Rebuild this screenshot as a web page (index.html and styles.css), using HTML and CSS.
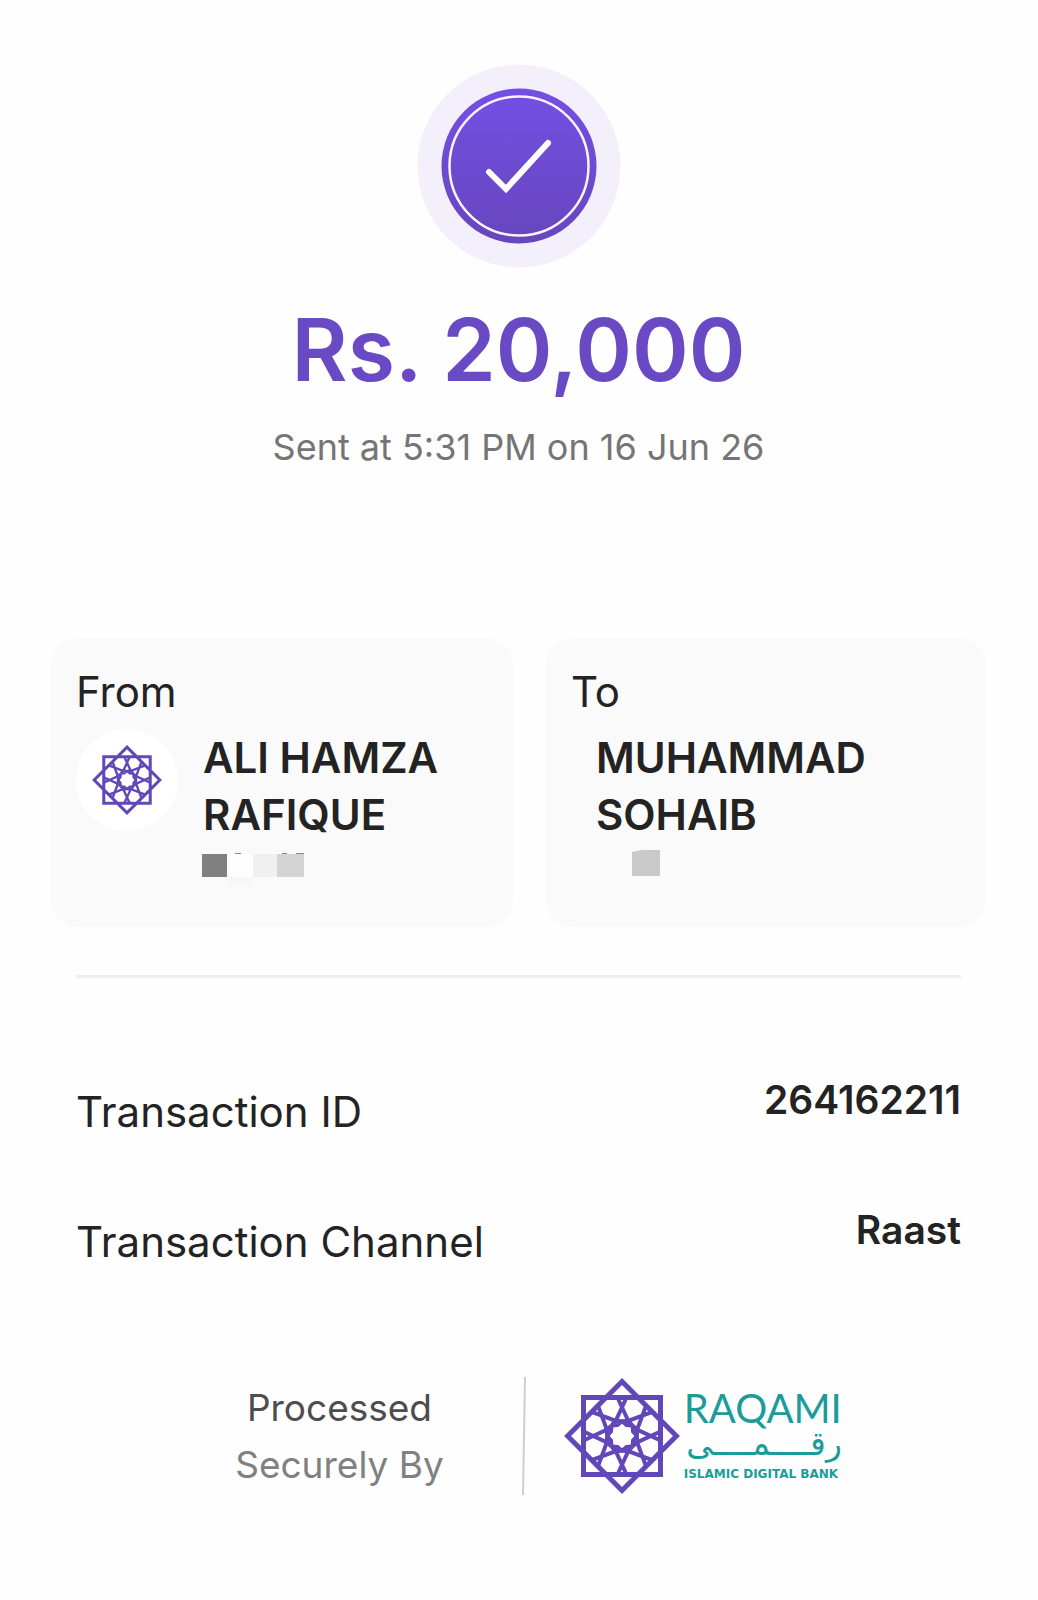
FILE: index.html
```html
<!DOCTYPE html>
<html lang="en">
<head>
<meta charset="utf-8">
<meta name="viewport" content="width=device-width, initial-scale=1">
<title>Transaction receipt</title>
<link rel="stylesheet" href="styles.css">
</head>
<body>
<svg class="defs" width="0" height="0" aria-hidden="true">
  <defs>
    <g id="rosette">
      <path d="M-38.5-38.5H38.5V38.5H-38.5ZM0-54.4L54.4 0L0 54.4L-54.4 0Z"/>
      <g id="half" stroke-width="4">
        <g id="quarter">
          <path id="strand" d="M-4.500-38.500L6.100-15.500L10.500-10.500M4.500-38.500L-6.100-15.500L-10.500-10.500M0-15L4.500-11L10.500-10.500"/>
          <use href="#strand" transform="rotate(45)"/>
        </g>
        <use href="#quarter" transform="rotate(90)"/>
      </g>
      <use href="#half" transform="rotate(180)"/>
    </g>
  </defs>
</svg>
<main class="receipt">
  <header class="summary">
    <svg class="status" viewBox="0 0 204 204" role="img" aria-label="Successful">
      <defs>
        <linearGradient id="badge" x1="0" y1="0" x2="0" y2="1">
          <stop offset="0" stop-color="#7350e4"/>
          <stop offset="1" stop-color="#6746bd"/>
        </linearGradient>
      </defs>
      <circle cx="102" cy="102" r="101.5" fill="#f3f0fc"/>
      <circle cx="102" cy="102" r="77.5" fill="url(#badge)"/>
      <circle cx="102" cy="102" r="69.5" fill="none" stroke="#fbf3ff" stroke-width="2.5"/>
      <path d="M72 108L89 125L131 79" fill="none" stroke="#fff" stroke-width="6" stroke-linecap="round"/>
    </svg>
    <h1 class="amount">Rs. 20,000</h1>
    <p class="time">Sent at 5:31 PM on 16 Jun 26</p>
  </header>

  <section class="parties">
    <article class="card">
      <h2 class="role">From</h2>
      <div class="person">
        <span class="avatar"><svg class="avatar-mark" viewBox="-58 -58 116 116"><use href="#rosette"/></svg></span>
        <div class="identity">
          <p class="name">ALI HAMZA RAFIQUE</p>
          <svg class="mask" viewBox="0 0 112 38" aria-hidden="true">
            <path fill="#808080" d="M-1 7h25v23h-25z"/>
            <path fill="#fdfdfd" d="M26 7h24v23H26z"/>
            <path fill="#f7f7f7" d="M26 30h24v9H26z"/>
            <path fill="#f0f0f0" d="M50 7h24v23H50z"/>
            <path fill="#d4d4d4" d="M74 7h27v23H74z"/>
            <path fill="#888" d="M32 6h6v1h-6zM79 6h5v1h-5zM93 6h8v1h-8z"/>
          </svg>
        </div>
      </div>
    </article>
    <article class="card">
      <h2 class="role">To</h2>
      <div class="person">
        <div class="identity">
          <p class="name">MUHAMMAD SOHAIB</p>
          <svg class="mask" viewBox="0 0 112 38" aria-hidden="true">
            <path fill="#cacaca" d="M36 5l10-2h18v26H36z"/>
            <path fill="#fbfbfb" d="M65 8h20v40H65z"/>
          </svg>
        </div>
      </div>
    </article>
  </section>

  <dl class="details">
    <div class="detail"><dt>Transaction ID</dt><dd>264162211</dd></div>
    <div class="detail"><dt>Transaction Channel</dt><dd>Raast</dd></div>
  </dl>

  <footer class="footer">
    <p class="processed"><span>Processed</span><br>Securely By</p>
    <svg class="rule" viewBox="0 0 4 118" aria-hidden="true"><path d="M3 0L1 118" stroke="#cfcfcf" stroke-width="2"/></svg>
    <div class="brand">
      <svg class="brand-mark" viewBox="-58 -58 116 116" aria-hidden="true"><use href="#rosette"/></svg>
      <div class="wordmark">
        <span class="latin">RAQAMI</span>
        <span class="arabic" lang="ar" dir="rtl">رقــــمــــى</span>
        <span class="tagline">ISLAMIC DIGITAL BANK</span>
      </div>
    </div>
  </footer>
</main>
</body>
</html>
```
FILE: styles.css
```css
* {
  box-sizing: border-box;
}

body {
  margin: 0;
  background: #fefefe;
  color: #232323;
  font-family: Inter, "Liberation Sans", sans-serif;
}

h1, h2, p, dl, dd {
  margin: 0;
}

.defs {
  position: absolute;
}

.receipt {
  padding: 64px 52px 64px 51px;
}

.summary {
  display: flex;
  flex-direction: column;
  align-items: center;
}

.status {
  width: 204px;
  height: 204px;
}

.amount {
  margin-top: 28px;
  font-size: 86px;
  font-weight: 600;
  line-height: 108px;
  color: #6949c4;
}

.time {
  margin-top: 20px;
  font-size: 36px;
  font-weight: 400;
  line-height: 46px;
  color: #757575;
}

.parties {
  display: grid;
  grid-template-columns: 21fr 20fr;
  gap: 33px;
  margin-top: 168px;
}

.card {
  min-height: 289px;
  padding: 26px 25px;
  border-radius: 26px;
  background: #fafafa;
}

.role {
  font-size: 42px;
  font-weight: 400;
  line-height: 56px;
}

.person {
  display: flex;
  gap: 25px;
  margin-top: 9px;
}

.person .identity:first-child {
  padding-left: 25px;
}

.avatar {
  display: grid;
  flex: none;
  place-items: center;
  width: 102px;
  height: 102px;
  border-radius: 50%;
  background: #fff;
}

.avatar-mark,
.brand-mark {
  fill: none;
  stroke: #6247b8;
  stroke-width: 5;
}

.avatar-mark {
  width: 70px;
  height: 70px;
}

.name {
  font-size: 42px;
  font-weight: 600;
  line-height: 57px;
}

.mask {
  display: block;
  width: 112px;
  height: 38px;
  margin-top: 4px;
  overflow: visible;
}

.details {
  display: grid;
  gap: 76px;
  margin: 48px 25px 0;
  padding-top: 106px;
  border-top: 3px solid #eee;
}

.detail {
  display: flex;
  justify-content: space-between;
}

.detail dt {
  padding-top: 2px;
  font-size: 42px;
  font-weight: 400;
  line-height: 52px;
}

.detail dd {
  font-size: 39px;
  font-weight: 600;
  line-height: 32px;
}

.footer {
  display: flex;
  justify-content: center;
  align-items: center;
  margin-top: 109px;
  padding-left: 40px;
}

.processed {
  font-size: 37px;
  font-weight: 400;
  line-height: 57px;
  text-align: center;
  color: #808080;
}

.processed span {
  color: #4d4d4d;
}

.rule {
  width: 4px;
  height: 118px;
  margin: 0 38px 0 78px;
}

.brand {
  display: flex;
  align-items: center;
  gap: 4px;
}

.brand-mark {
  width: 116px;
  height: 116px;
}

.wordmark {
  display: flex;
  flex-direction: column;
  color: #1b9c9b;
}

.latin {
  font-family: Lato, sans-serif;
  font-size: 40px;
  line-height: 36px;
}

.arabic {
  font-family: "DejaVu Sans", sans-serif;
  font-size: 33px;
  line-height: 36px;
}

.tagline {
  padding-top: 4px;
  font-family: "DejaVu Sans", sans-serif;
  font-size: 12px;
  font-weight: 700;
  line-height: 16px;
}
```
